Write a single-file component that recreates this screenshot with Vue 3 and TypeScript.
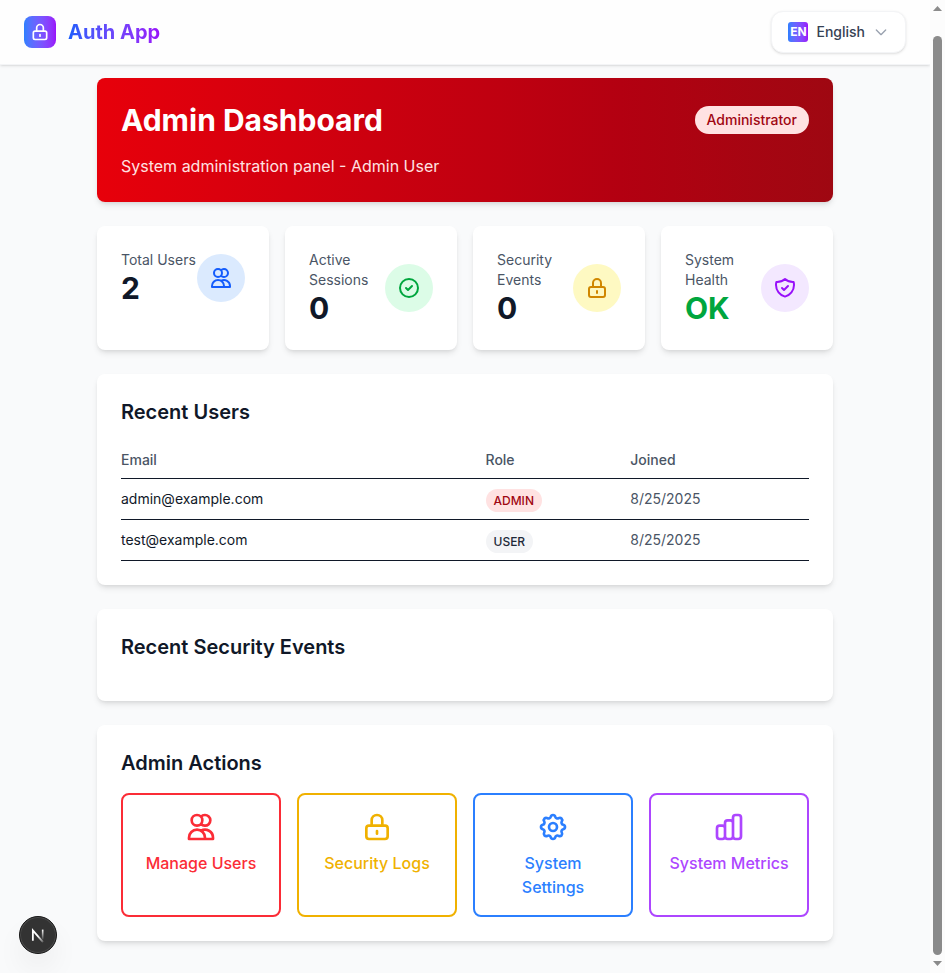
<script setup lang="ts">
interface Stat {
  label: string
  value: string
  icon: string
  tone: string
}

interface User {
  email: string
  role: 'ADMIN' | 'USER'
  joined: string
}

interface Action {
  label: string
  icon: string
  tone: string
}

const icons = {
  users:
    'M12 4.354a4 4 0 110 5.292M15 21H3v-1a6 6 0 0112 0v1zm0 0h6v-1a6 6 0 00-9-5.197M13 7a4 4 0 11-8 0 4 4 0 018 0z',
  check: 'M9 12l2 2 4-4m6 2a9 9 0 11-18 0 9 9 0 0118 0z',
  lock: 'M12 15v2m-6 4h12a2 2 0 002-2v-6a2 2 0 00-2-2H6a2 2 0 00-2 2v6a2 2 0 002 2zm10-10V7a4 4 0 00-8 0v4h8z',
  shield:
    'M9 12l2 2 4-4m5.618-4.016A11.955 11.955 0 0112 2.944a11.955 11.955 0 01-8.618 3.04A12.02 12.02 0 003 9c0 5.591 3.824 10.29 9 11.622 5.176-1.332 9-6.03 9-11.622 0-1.042-.133-2.052-.382-3.016z',
  cog: 'M10.325 4.317c.426-1.756 2.924-1.756 3.35 0a1.724 1.724 0 002.573 1.066c1.543-.94 3.31.826 2.37 2.37a1.724 1.724 0 001.065 2.572c1.756.426 1.756 2.924 0 3.35a1.724 1.724 0 00-1.066 2.573c.94 1.543-.826 3.31-2.37 2.37a1.724 1.724 0 00-2.572 1.065c-.426 1.756-2.924 1.756-3.35 0a1.724 1.724 0 00-2.573-1.066c-1.543.94-3.31-.826-2.37-2.37a1.724 1.724 0 00-1.065-2.572c-1.756-.426-1.756-2.924 0-3.35a1.724 1.724 0 001.066-2.573c-.94-1.543.826-3.31 2.37-2.37.996.608 2.296.07 2.572-1.065z M15 12a3 3 0 11-6 0 3 3 0 016 0z',
  chart:
    'M9 19v-6a2 2 0 00-2-2H5a2 2 0 00-2 2v6a2 2 0 002 2h2a2 2 0 002-2zm0 0V9a2 2 0 012-2h2a2 2 0 012 2v10m-6 0a2 2 0 002 2h2a2 2 0 002-2m0 0V5a2 2 0 012-2h2a2 2 0 012 2v14a2 2 0 01-2 2h-2a2 2 0 01-2-2z',
}

const stats: Stat[] = [
  { label: 'Total Users', value: '2', icon: icons.users, tone: 'blue' },
  { label: 'Active Sessions', value: '0', icon: icons.check, tone: 'green' },
  { label: 'Security Events', value: '0', icon: icons.lock, tone: 'yellow' },
  { label: 'System Health', value: 'OK', icon: icons.shield, tone: 'purple' },
]

const users: User[] = [
  { email: 'admin@example.com', role: 'ADMIN', joined: '8/25/2025' },
  { email: 'test@example.com', role: 'USER', joined: '8/25/2025' },
]

const actions: Action[] = [
  { label: 'Manage Users', icon: icons.users, tone: 'red' },
  { label: 'Security Logs', icon: icons.lock, tone: 'yellow' },
  { label: 'System Settings', icon: icons.cog, tone: 'blue' },
  { label: 'System Metrics', icon: icons.chart, tone: 'purple' },
]
</script>

<template>
  <div class="shell">
    <div class="page">
      <header class="topbar">
        <div class="brand">
          <span class="logo">
            <svg class="icon" viewBox="0 0 24 24"><path :d="icons.lock" /></svg>
          </span>
          <span class="brand-name">Auth App</span>
        </div>
        <button class="language" type="button">
          <span class="code">EN</span>
          <span>English</span>
          <svg class="icon chevron" viewBox="0 0 24 24"><path d="M19 9l-7 7-7-7" /></svg>
        </button>
      </header>

      <main class="content">
        <section class="banner">
          <div>
            <h1>Admin Dashboard</h1>
            <p>System administration panel - Admin User</p>
          </div>
          <span class="admin-badge">Administrator</span>
        </section>

        <section class="stats">
          <article v-for="stat in stats" :key="stat.label" class="card">
            <div class="stat-row">
              <div>
                <p class="stat-label">{{ stat.label }}</p>
                <p class="stat-value" :class="{ healthy: stat.value === 'OK' }">{{ stat.value }}</p>
              </div>
              <span class="stat-icon" :class="stat.tone">
                <svg class="icon" viewBox="0 0 24 24"><path :d="stat.icon" /></svg>
              </span>
            </div>
          </article>
        </section>

        <section class="card">
          <h2>Recent Users</h2>
          <table>
            <colgroup>
              <col class="col-email" />
              <col class="col-role" />
              <col />
            </colgroup>
            <thead>
              <tr>
                <th>Email</th>
                <th>Role</th>
                <th>Joined</th>
              </tr>
            </thead>
            <tbody>
              <tr v-for="user in users" :key="user.email">
                <td class="email">{{ user.email }}</td>
                <td><span class="role" :class="user.role.toLowerCase()">{{ user.role }}</span></td>
                <td class="joined">{{ user.joined }}</td>
              </tr>
            </tbody>
          </table>
        </section>

        <section class="card">
          <h2>Recent Security Events</h2>
        </section>

        <section class="card">
          <h2>Admin Actions</h2>
          <div class="actions">
            <button
              v-for="action in actions"
              :key="action.label"
              type="button"
              class="action"
              :class="action.tone"
            >
              <svg class="icon" viewBox="0 0 24 24"><path :d="action.icon" /></svg>
              <span>{{ action.label }}</span>
            </button>
          </div>
        </section>
      </main>
    </div>

    <div class="scrollbar">
      <svg class="arrow" viewBox="0 0 9 5"><path d="M4.5 0L9 5H0z" /></svg>
      <div class="thumb"></div>
      <svg class="arrow" viewBox="0 0 9 5"><path d="M0 0h9L4.5 5z" /></svg>
    </div>

    <div class="dev-badge">
      <svg viewBox="0 0 40 40" fill="none">
        <defs>
          <linearGradient id="dev-diagonal" gradientUnits="userSpaceOnUse" x1="20" y1="21" x2="26.5" y2="29">
            <stop stop-color="#fff" />
            <stop offset="0.7" stop-color="#fff" stop-opacity="0.4" />
            <stop offset="1" stop-color="#fff" stop-opacity="0" />
          </linearGradient>
          <linearGradient id="dev-stem" gradientUnits="userSpaceOnUse" x1="25" y1="14" x2="25" y2="26">
            <stop stop-color="#fff" />
            <stop offset="1" stop-color="#fff" stop-opacity="0" />
          </linearGradient>
        </defs>
        <path d="M14.3 26.3V15L25.6 28" stroke="url(#dev-diagonal)" stroke-width="2" />
        <path d="M25.2 14V25" stroke="url(#dev-stem)" stroke-width="1.8" />
      </svg>
    </div>
  </div>
</template>

<style>
body {
  margin: 0;
  background: #f9fafb;
}
</style>

<style scoped>
.shell {
  display: flex;
  height: 973px;
  overflow: hidden;
  background: #f9fafb;
  color: #101828;
  font-family: Inter, 'Liberation Sans', sans-serif;
  font-size: 16px;
  line-height: 24px;
}

.shell *,
.shell *::before {
  box-sizing: border-box;
}

h1,
h2,
p {
  margin: 0;
}

button {
  margin: 0;
  background: none;
  font: inherit;
}

.icon {
  display: block;
  flex: none;
  width: 24px;
  height: 24px;
  fill: none;
  stroke: currentColor;
  stroke-width: 2;
  stroke-linecap: round;
  stroke-linejoin: round;
}

.page {
  flex: 1;
  min-width: 0;
}

.topbar {
  display: flex;
  align-items: center;
  justify-content: space-between;
  height: 65px;
  padding: 0 24px;
  border-bottom: 1px solid #f3f4f6;
  background: #fefefe;
  box-shadow: 0 1px 3px rgb(0 0 0 / 0.1), 0 1px 2px -1px rgb(0 0 0 / 0.1);
}

.brand {
  display: flex;
  align-items: center;
  gap: 12px;
}

.logo {
  display: flex;
  align-items: center;
  justify-content: center;
  width: 32px;
  height: 32px;
  border-radius: 8px;
  background: linear-gradient(to right in oklab, oklch(62.3% 0.214 259.815), oklch(55.8% 0.288 302.321));
  color: #fff;
}

.logo .icon {
  width: 20px;
  height: 20px;
}

.brand-name {
  background: linear-gradient(to right in oklab, oklch(54.6% 0.245 262.881), oklch(55.8% 0.288 302.321));
  background-clip: text;
  color: transparent;
  font-size: 20px;
  font-weight: 700;
  line-height: 28px;
}

.language {
  display: flex;
  align-items: center;
  gap: 8px;
  height: 42px;
  padding: 0 16px;
  border: 1px solid #f3f4f6;
  border-radius: 12px;
  background: #fff;
  box-shadow: 0 1px 3px rgb(0 0 0 / 0.1), 0 1px 2px -1px rgb(0 0 0 / 0.1);
  color: #364153;
  font-size: 14px;
  font-weight: 500;
  line-height: 20px;
}

.code {
  display: flex;
  align-items: center;
  justify-content: center;
  width: 20px;
  height: 20px;
  border-radius: 3px;
  background: linear-gradient(to right in oklab, oklch(62.3% 0.214 259.815), oklch(55.8% 0.288 302.321));
  color: #fff;
  font-size: 12px;
  font-weight: 700;
  line-height: 16px;
}

.chevron {
  width: 16px;
  height: 16px;
  color: #99a1af;
}

.content {
  display: flex;
  flex-direction: column;
  gap: 24px;
  width: 768px;
  margin: 0 auto;
  padding: 13px 16px 32px;
}

.banner {
  display: flex;
  align-items: flex-start;
  justify-content: space-between;
  height: 124px;
  padding: 24px;
  border-radius: 8px;
  background: linear-gradient(to right in oklab, oklch(57.7% 0.245 27.325), oklch(44.4% 0.177 26.899));
  box-shadow: 0 4px 6px -1px rgb(0 0 0 / 0.1), 0 2px 4px -2px rgb(0 0 0 / 0.1);
  color: #fff;
}

.banner h1 {
  font-size: 30px;
  font-weight: 700;
  line-height: 36px;
}

.banner p {
  margin-top: 16px;
  color: #ffe2e2;
}

.admin-badge {
  margin-top: 4px;
  padding: 4px 12px;
  border-radius: 14px;
  background: #ffe2e2;
  color: #9f0712;
  font-size: 14px;
  font-weight: 500;
  line-height: 20px;
}

.card {
  padding: 24px;
  border-radius: 8px;
  background: #fff;
  box-shadow: 0 4px 6px -1px rgb(0 0 0 / 0.1), 0 2px 4px -2px rgb(0 0 0 / 0.1);
}

.card h2 {
  margin-bottom: 16px;
  font-size: 20px;
  font-weight: 600;
  line-height: 28px;
}

.stats,
.actions {
  display: grid;
  grid-template-columns: repeat(4, minmax(0, 1fr));
  gap: 16px;
}

.stat-row {
  display: flex;
  align-items: center;
  justify-content: space-between;
}

.stat-label {
  color: #4a5565;
  font-size: 14px;
  line-height: 20px;
}

.stat-value {
  font-size: 30px;
  font-weight: 700;
  line-height: 36px;
}

.healthy {
  color: #00a63e;
}

.stat-icon {
  display: flex;
  flex: none;
  align-items: center;
  justify-content: center;
  width: 48px;
  height: 48px;
  border-radius: 50%;
}

.stat-icon.blue {
  background: #dbeafe;
  color: #155dfc;
}

.stat-icon.green {
  background: #dcfce7;
  color: #00a63e;
}

.stat-icon.yellow {
  background: #fef9c2;
  color: #d08700;
}

.stat-icon.purple {
  background: #f3e8ff;
  color: #9810fa;
}

.stats .card {
  height: 124px;
}

table {
  width: 100%;
  border-spacing: 0;
  table-layout: fixed;
}

.col-email {
  width: 364.5px;
}

.col-role {
  width: 144.75px;
}

th,
td {
  padding: 8px 0;
  border-bottom: 1px solid #101828;
  text-align: left;
}

th {
  color: #4a5565;
  font-size: 14px;
  font-weight: 500;
  line-height: 20px;
}

.email,
.joined {
  font-size: 14px;
  line-height: 20px;
}

.joined {
  color: #4a5565;
}

.role {
  padding: 4px 8px;
  border-radius: 12px;
  font-size: 12px;
  font-weight: 500;
  line-height: 16px;
}

.role.admin {
  background: #ffe2e2;
  color: #9f0712;
}

.role.user {
  background: #f3f4f6;
  color: #1e2939;
}

.action {
  display: flex;
  flex-direction: column;
  align-items: center;
  gap: 8px;
  min-height: 124px;
  padding: 16px 18px;
  border: 2px solid currentColor;
  border-radius: 8px;
  font-weight: 500;
  text-align: center;
}

.action .icon {
  width: 32px;
  height: 32px;
}

.action.red {
  color: #fb2c36;
}

.action.yellow {
  color: #f0b100;
}

.action.blue {
  color: #2b7fff;
}

.action.purple {
  color: #ad46ff;
}

.scrollbar {
  display: flex;
  flex: none;
  flex-direction: column;
  align-items: center;
  justify-content: space-between;
  width: 15px;
  padding: 6px 0 7px;
  background: #fcfcfc;
}

.arrow {
  display: block;
  width: 9px;
  height: 5px;
  fill: #8b8b8b;
}

.thumb {
  width: 9px;
  height: 919px;
  margin-top: 25px;
  margin-bottom: auto;
  border-radius: 4.5px;
  background: #8b8b8b;
}

.dev-badge {
  position: fixed;
  bottom: 19px;
  left: 19px;
  width: 38px;
  height: 38px;
  border: 1px solid #161616;
  border-radius: 50%;
  background: #333;
  box-shadow: inset 0 0 0 1px #4b4b4b, 0 16px 32px -8px rgb(0 0 0 / 0.14);
}

.dev-badge svg {
  display: block;
  width: 36px;
  height: 36px;
}
</style>
